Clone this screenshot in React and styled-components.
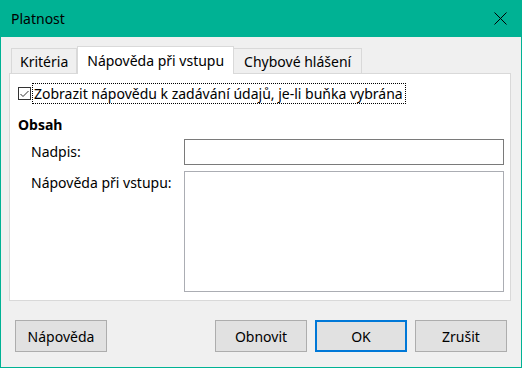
import React from 'react';
import styled, { createGlobalStyle } from 'styled-components';

const GlobalStyle = createGlobalStyle`
  html, body { margin: 0; padding: 0; background: #f0f0f0; }
  body { font-family: "Noto Sans", "Open Sans", sans-serif; font-size: 14px; color: #000; }
  * { box-sizing: border-box; }
`;

const ACCENT = '#00b294';

const Window = styled.div`
  width: 522px;
  height: 368px;
  display: flex;
  flex-direction: column;
  background: #f0f0f0;
  border: 1px solid ${ACCENT};
  border-top: none;
`;

const TitleBar = styled.div`
  height: 37px;
  margin: 0 -1px;
  background: ${ACCENT};
  display: flex;
  align-items: center;
  justify-content: space-between;
  padding: 0 15px 0 11px;
  font-size: 14px;
`;

const Body = styled.div`
  display: flex;
  flex-direction: column;
  padding: 9px 10px 0 8px;
`;

const TabRow = styled.div`
  display: flex;
  align-items: flex-end;
  padding-left: 2px;
  height: 27px;
`;

const Tab = styled.div`
  height: ${p => (p.$active ? 28 : 26)}px;
  padding: 0 ${p => p.$pad || 8}px;
  margin-bottom: -1px;
  background: ${p => (p.$active ? '#fff' : '#f0f0f0')};
  border: 1px solid #d9d9d9;
  border-bottom: ${p => (p.$active ? 'none' : '1px solid #d9d9d9')};
  border-left: ${p => (p.$active ? '1px solid #d9d9d9' : 'none')};
  display: flex;
  align-items: center;
  position: relative;
  z-index: ${p => (p.$active ? 2 : 1)};
  white-space: nowrap;
  &:first-child { border-left: 1px solid #d9d9d9; }
`;

const Panel = styled.div`
  width: 502px;
  height: 228px;
  background: #fff;
  border: 1px solid #d9d9d9;
  padding: 9px 0 0 8px;
  position: relative;
  z-index: 1;
`;

const CheckRow = styled.label`
  display: flex;
  align-items: center;
  gap: 2px;
  height: 20px;
`;

const Check = styled.span`
  width: 13px;
  height: 13px;
  border: 1px solid #333;
  display: flex;
  align-items: center;
  justify-content: center;
  margin-top: 1px;
`;

const FocusText = styled.span`
  outline: 1px dotted #000;
  outline-offset: 0;
  padding: 0 2px 0 1px;
  height: 19px;
  line-height: 19px;
  white-space: nowrap;
`;

const Heading = styled.div`
  font-weight: bold;
  margin-top: 13px;
  height: 18px;
  line-height: 18px;
`;

const Form = styled.div`
  display: grid;
  grid-template-columns: 153px 320px;
  row-gap: 6px;
  padding-left: 13px;
  margin-top: 5px;
`;

const Label = styled.div`
  line-height: ${p => (p.$top ? '24px' : '26px')};
`;

const Field = styled.div`
  height: ${p => p.$h}px;
  border: 1px solid ${p => p.$border};
  background: #fff;
`;

const Footer = styled.div`
  display: flex;
  align-items: center;
  gap: 8px;
  padding: 19px 14px 0 14px;
`;

const Button = styled.button`
  width: 92px;
  height: 32px;
  font: inherit;
  color: #000;
  background: #e1e1e1;
  border: ${p => (p.$default ? '2px solid #0078d7' : '1px solid #adadad')};
  padding: 0;
  margin-left: ${p => (p.$push ? 'auto' : '0')};
`;

export default function App() {
  return (
    <>
      <GlobalStyle />
      <Window>
        <TitleBar>
          <span>Platnost</span>
          <svg width="13" height="13" viewBox="0 0 13 13">
            <path d="M0.5 0.5L12.5 12.5M12.5 0.5L0.5 12.5" stroke="#000" strokeWidth="1" />
          </svg>
        </TitleBar>
        <Body>
          <TabRow>
            <Tab>Kritéria</Tab>
            <Tab $active $pad={9}>Nápověda při vstupu</Tab>
            <Tab $pad={10}>Chybové hlášení</Tab>
          </TabRow>
          <Panel>
            <CheckRow>
              <Check>
                <svg width="9" height="8" viewBox="0 0 9 8">
                  <path d="M0.5 4L3 6.5L8.5 1" stroke="#333" strokeWidth="1" fill="none" />
                </svg>
              </Check>
              <FocusText>Zobrazit nápovědu k zadávání údajů, je-li buňka vybrána</FocusText>
            </CheckRow>
            <Heading>Obsah</Heading>
            <Form>
              <Label>Nadpis:</Label>
              <Field $h={26} $border="#7a7a7a" />
              <Label $top>Nápověda při vstupu:</Label>
              <Field $h={121} $border="#abadb3" />
            </Form>
          </Panel>
        </Body>
        <Footer>
          <Button>Nápověda</Button>
          <Button $push>Obnovit</Button>
          <Button $default>OK</Button>
          <Button>Zrušit</Button>
        </Footer>
      </Window>
    </>
  );
}
